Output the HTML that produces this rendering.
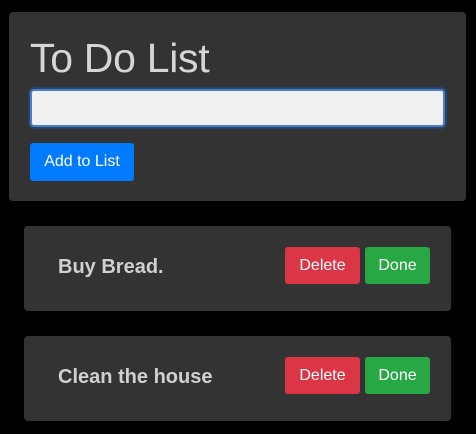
<html><head><style>
body{margin:0;background:#000;width:476px;height:434px;position:relative;font-family:"Liberation Sans",sans-serif;overflow:hidden}
.card{position:absolute;background:#333;border-radius:4px}
.t{position:absolute;left:21px;top:23px;font-size:41px;color:#d6d6d6;line-height:46px;letter-spacing:-0.3px}
.in{position:absolute;left:21px;top:77px;width:411px;height:34px;background:#f0f0f0;border:2px solid #4a80c8;border-radius:4px;box-shadow:0 0 0 2px #2a4468}
.btn{position:absolute;color:#fff;font-size:16px;border-radius:3px;text-align:center;line-height:37px;height:37px}
.item{position:absolute;left:34px;font-weight:bold;font-size:20px;color:#d0d0d0}
</style></head><body>
<div class="card" style="left:9px;top:12px;width:457px;height:189px">
<div class="t">To Do List</div>
<div class="in"></div>
<div class="btn" style="left:21px;top:131px;width:104px;background:#007bff;line-height:38px;height:38px">Add to List</div>
</div>
<div class="card" style="left:24px;top:226px;width:427px;height:85px">
<div class="item" style="top:30px">Buy Bread.</div>
<div class="btn" style="left:261px;top:21px;width:75px;background:#dc3545">Delete</div>
<div class="btn" style="left:341px;top:21px;width:65px;background:#28a745">Done</div>
</div>
<div class="card" style="left:24px;top:336px;width:427px;height:85px">
<div class="item" style="top:30px">Clean the house</div>
<div class="btn" style="left:261px;top:21px;width:75px;background:#dc3545">Delete</div>
<div class="btn" style="left:341px;top:21px;width:65px;background:#28a745">Done</div>
</div>
</body></html>
